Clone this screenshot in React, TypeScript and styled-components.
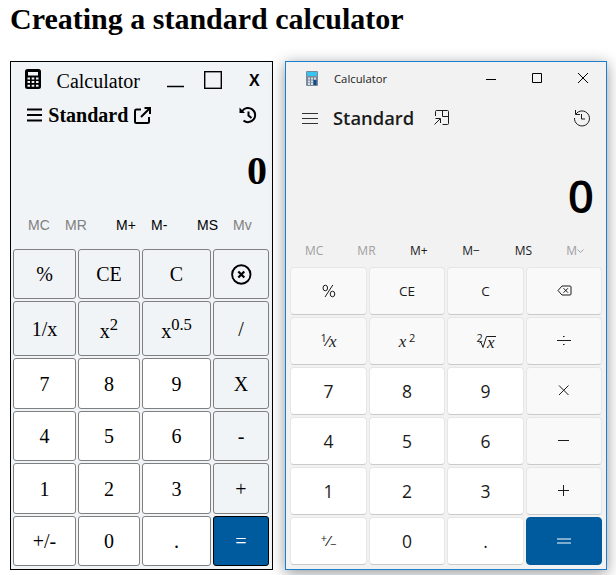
import React from "react";
import styled, { createGlobalStyle } from "styled-components";

const GlobalStyle = createGlobalStyle`
  * { box-sizing: border-box; }
  body { margin: 0; background: #fff; color: #000; overflow: hidden; }
  svg { display: block; }
`;
const serif = `"Liberation Serif", "Times New Roman", serif`;
const segoe = `"Open Sans", "Segoe UI", sans-serif`;

const Page = styled.main`
  height: 575px;
  overflow: hidden;
  padding: 1px 0 0 10px;
`;
const Heading = styled.h1`
  margin: 0;
  height: 60px;
  font: bold 30px/36px ${serif};
  white-space: nowrap;
`;
const Windows = styled.div`
  display: flex;
  gap: 12px;
`;
const BasicWindow = styled.section`
  width: 263px;
  height: 509px;
  border: 1px solid #000;
  background: #f0f4f7;
  font-family: ${serif};
`;
const Bar = styled.div<{ $h: number }>`
  display: flex;
  align-items: center;
  height: ${(p) => p.$h}px;
`;
const Label = styled.span<{ $size: number; $left: number; $w: number; $bold?: boolean; $top?: number }>`
  margin-left: ${(p) => p.$left}px;
  width: ${(p) => p.$w}px;
  padding-top: ${(p) => p.$top ?? 0}px;
  font-size: ${(p) => p.$size}px;
  font-weight: ${(p) => (p.$bold ? 600 : 400)};
  white-space: nowrap;
`;
const Icon = styled.svg<{ $left: number }>`
  flex: none;
  margin-left: ${(p) => p.$left}px;
  overflow: visible;
`;
const CloseLetter = styled.span`
  margin-left: 27px;
  padding-top: 1px;
  font: bold 16px/20px "Liberation Sans", Arial, sans-serif;
`;
const BasicDisplay = styled.div`
  height: 75px;
  padding: 16px 5px 0 0;
  text-align: right;
  font-size: 40px;
  line-height: 46px;
  font-weight: bold;
`;
const BasicMemory = styled.div`
  display: grid;
  grid-template-columns: 37px 51px 35px 46px 36px 30px;
  height: 39px;
  padding: 9px 0 0 17px;
  font: 14px/18px "Liberation Sans", Arial, sans-serif;
`;
const MemoryKey = styled.span<{ $off?: boolean }>`
  color: ${(p) => (p.$off ? "#808080" : "#000")};
`;
const BasicKeys = styled.div`
  display: grid;
  grid-template-columns: 63px 62px 69px 56px;
  grid-template-rows: 50px 55px 51px 50px 51px 50px;
  gap: 2px;
  padding: 3px 0 0 2px;
`;
type Tone = "soft" | "white" | "accent";
const BasicKey = styled.button<{ $tone: Tone }>`
  display: flex;
  align-items: center;
  justify-content: center;
  padding: 1px 0 0;
  border: 1px solid ${(p) => (p.$tone === "accent" ? "#000" : "#808080")};
  border-radius: 3px;
  background: ${(p) => ({ soft: "#f0f4f7", white: "#fff", accent: "#005a9e" })[p.$tone]};
  color: ${(p) => (p.$tone === "accent" ? "#fff" : "#000")};
  font: 20px/23px ${serif};
  sup { font-size: 16.6px; line-height: 18px; }
`;

const ModernWindow = styled.section`
  width: 322px;
  height: 509px;
  border: 1px solid #1b7fd0;
  background: #f2f2f2;
  color: #1b1b1b;
  font-family: ${segoe};
  box-shadow: 0 3px 14px rgba(0, 0, 0, 0.42);
`;
const ModernDisplay = styled.div`
  height: 94px;
  padding: 28px 12px 0 0;
  text-align: right;
  font-size: 46px;
  line-height: 54px;
  font-weight: 600;
  color: #000;
`;
const ModernMemory = styled.div`
  display: grid;
  grid-template-columns: repeat(6, 52.3px);
  align-content: start;
  height: 33px;
  padding: 8px 0 0 2px;
  font-size: 12px;
  line-height: 18px;
  text-align: center;
`;
const ModernMemoryKey = styled.span<{ $off?: boolean }>`
  display: flex;
  align-items: center;
  justify-content: center;
  color: ${(p) => (p.$off ? "#a0a0a0" : "#1b1b1b")};
`;
const ModernKeys = styled.div`
  display: grid;
  grid-template-columns: 77px 76px 77px 76px;
  grid-auto-rows: 48px;
  gap: 2px;
  padding-left: 4px;
`;
const ModernKey = styled.button<{ $tone: Tone; $size?: number }>`
  display: flex;
  align-items: center;
  justify-content: center;
  padding: 0;
  border: 1px solid ${(p) => (p.$tone === "accent" ? "#005a9e" : "#e6e6e6")};
  border-bottom-color: ${(p) => (p.$tone === "accent" ? "#005a9e" : "#cacaca")};
  border-radius: 4px;
  background: ${(p) => ({ soft: "#f9f9f9", white: "#fff", accent: "#005a9e" })[p.$tone]};
  color: #1b1b1b;
  font-family: ${segoe};
  font-size: ${(p) => p.$size || 17.5}px;
  line-height: 22px;
`;
const Formula = styled.span`
  display: flex;
  align-items: center;
  height: 16px;
`;
const Small = styled.small<{ $low?: boolean; $pull?: number }>`
  align-self: ${(p) => (p.$low ? "flex-end" : "flex-start")};
  margin-right: ${(p) => -(p.$pull ?? 0)}px;
  font-size: 11px;
  line-height: 10px;
`;
const Slash = styled.span`
  margin: 0 -1px;
  font-size: 14px;
  line-height: 16px;
  transform: skewX(-14deg);
`;
const Variable = styled.i`
  font: italic 17px/17px ${serif};
`;
const Radicand = styled(Variable)`
  margin-left: -9px;
  padding-top: 2px;
`;

const stroke = { fill: "none", stroke: "currentColor" } as const;

const basicKeys: [React.ReactNode, Tone][] = [
  ["%", "soft"], ["CE", "soft"], ["C", "soft"],
  [
    <svg width="22" height="22" viewBox="0 0 22 22" {...stroke}>
      <circle cx="11.300" cy="10.500" r="9.200" strokeWidth="1.900" />
      <path d="m8.300 7.500 6 6m0-6-6 6" strokeWidth="2.200" />
    </svg>, "soft",
  ],
  ["1/x", "soft"], [<span>x<sup>2</sup></span>, "soft"], [<span>x<sup>0.5</sup></span>, "soft"], ["/", "soft"],
  ["7", "white"], ["8", "white"], ["9", "white"], ["X", "soft"],
  ["4", "white"], ["5", "white"], ["6", "white"], ["-", "soft"],
  ["1", "white"], ["2", "white"], ["3", "white"], ["+", "soft"],
  ["+/-", "white"], ["0", "white"], [".", "white"], ["=", "accent"],
];

const modernKeys: [React.ReactNode, Tone, number?][] = [
  [
    <svg width="14" height="14" viewBox="0 0 14 14" {...stroke}>
      <ellipse cx="3.300" cy="4" rx="2.300" ry="2.800" /><ellipse cx="10.500" cy="10" rx="2.300" ry="2.800" />
      <path d="M10.800 1 3 13" />
    </svg>, "soft", 0,
  ],
  ["CE", "soft", 13.5], ["C", "soft", 13.5],
  [
    <svg width="15" height="12" viewBox="0 0 15 12" {...stroke}>
      <path d="M5 1h8q1 0 1 1v7q0 1-1 1H5L1 5.500z M6.500 3.200l4.500 4.500m0-4.500L6.500 7.700" />
    </svg>, "soft", 0,
  ],
  [<Formula><Small $pull={1}>1</Small><Slash>/</Slash><Variable>x</Variable></Formula>, "soft", 0],
  [<Formula><Variable>x</Variable><Small>&nbsp;2</Small></Formula>, "soft", 0],
  [
    <Formula>
      <Small $pull={4}>2</Small>
      <svg width="17" height="15" viewBox="0 0 17 15" {...stroke}>
        <path d="M.5 9 2 8.200 4 13.500 7.500 2.500H17" />
      </svg>
      <Radicand>x</Radicand>
    </Formula>, "soft", 0,
  ],
  [
    <svg width="14" height="12" viewBox="0 0 14 12" {...stroke}>
      <path d="M0 5.500h14M6 1.500h1.600M6 9.500h1.600" />
    </svg>, "soft", 0,
  ],
  ["7", "white"], ["8", "white"], ["9", "white"],
  [<svg width="12" height="12" viewBox="0 0 12 12" {...stroke}><path d="m1 .5 9.500 9.500M10.500.5 1 10" /></svg>, "soft", 0],
  ["4", "white"], ["5", "white"], ["6", "white"],
  [<svg width="12" height="12" viewBox="0 0 12 12" {...stroke}><path d="M0 5.500h11" /></svg>, "soft", 0],
  ["1", "white"], ["2", "white"], ["3", "white"],
  [<svg width="12" height="12" viewBox="0 0 12 12" {...stroke}><path d="M0 5.500h11M5.500 0v11" /></svg>, "soft", 0],
  [<Formula><Small>+</Small><Slash>/</Slash><Small $low>−</Small></Formula>, "white", 0],
  ["0", "white"], [".", "white"],
  [<svg width="14" height="12" viewBox="0 0 14 12" {...stroke} stroke="#fff"><path d="M0 4h14M0 8h14" /></svg>, "accent", 0],
];

function BasicCalculator() {
  return (
    <BasicWindow>
      <Bar $h={36}>
        <Icon $left={14} width="16" height="20" viewBox="0 1 16 20">
          <rect width="16" height="20" rx="2.500" fill="#000" />
          <path d="M3 3h10v3.500H3zM2.500 8.500h2.500v2H2.500zm4.200 0h2.600v2H6.700zm4.300 0h2.500v2H11zM2.500 12h2.500v2H2.500zm4.200 0h2.600v2H6.700zm4.300 0h2.500v2H11zM2.500 15.700h2.500v2H2.500zm4.200 0h2.600v2H6.700zm4.300 0h2.500v2H11z" fill="#f0f4f7" />
        </Icon>
        <Label $size={20} $left={15.6} $w={84.4} $top={2}>Calculator</Label>
        <Icon $left={26} width="17" height="18" viewBox="0 0 17 18" {...stroke}><path d="M0 15.500h17" strokeWidth="1.500" /></Icon>
        <Icon $left={20} width="18" height="18" viewBox="0 0 18 18" {...stroke}><rect x=".7" y=".7" width="16.600" height="16.600" strokeWidth="1.400" /></Icon>
        <CloseLetter>X</CloseLetter>
      </Bar>
      <Bar $h={34}>
        <Icon $left={16} width="15" height="14" viewBox="0 0 15 14" {...stroke}><path d="M0 1.500h15M0 7h15M0 12.500h15" strokeWidth="1.900" /></Icon>
        <Label $size={20} $left={6.3} $w={80} $bold>Standard</Label>
        <Icon $left={5.7} width="18" height="18" viewBox="0 0 18 18" {...stroke}>
          <path d="M7 3.500H2.500Q1 3.500 1 5v10.500Q1 17 2.500 17h11q1.500 0 1.500-1.500V11M10.500 2H16v6M16 2 7 11" strokeWidth="2" />
        </Icon>
        <Icon $left={87} width="18" height="18" viewBox="0 0 18 18" {...stroke}>
          <path d="M3.200 5A7.100 7.100 0 1 1 4.500 14.500M9.500 5.500v4l3 2.500" strokeWidth="2" />
          <path d="M.5 1.500v5.500H6z" fill="currentColor" stroke="none" />
        </Icon>
      </Bar>
      <BasicDisplay>0</BasicDisplay>
      <BasicMemory>
        <MemoryKey $off>MC</MemoryKey><MemoryKey $off>MR</MemoryKey>
        <MemoryKey>M+</MemoryKey><MemoryKey>M-</MemoryKey><MemoryKey>MS</MemoryKey><MemoryKey $off>Mv</MemoryKey>
      </BasicMemory>
      <BasicKeys>
        {basicKeys.map(([face, tone], i) => <BasicKey key={i} $tone={tone}>{face}</BasicKey>)}
      </BasicKeys>
    </BasicWindow>
  );
}

function ModernCalculator() {
  return (
    <ModernWindow>
      <Bar $h={33}>
        <Icon $left={20} width="12" height="15" viewBox="0 0 12 15">
          <rect width="12" height="15" rx="1" fill="#798b9b" />
          <path d="M1 1h10v4H1z" fill="#36c5f0" />
          <path d="M2 6.500h2v2H2zm3 0h2v2H5zm3 0h2v2H8zM2 9.500h2v2H2zm3 0h2v2H5zM2 12h2v2H2zm3 0h2v2H5z" fill="#d3dce4" />
          <path d="M7.500 9H10.500v5H7.500z" fill="#114a8b" />
        </Icon>
        <Label $size={11.3} $left={16} $w={56}>Calculator</Label>
        <Icon $left={96} width="10" height="10" viewBox="0 1 10 10" {...stroke} stroke="#000"><path d="M0 6.500h10" /></Icon>
        <Icon $left={36} width="10" height="12" viewBox="0 0 10 12" {...stroke} stroke="#000"><path d="M.5.5h9v9h-9z" /></Icon>
        <Icon $left={36} width="10" height="12" viewBox="0 0 10 12" {...stroke} stroke="#000"><path d="m0 0 10 10M10 0 0 10" /></Icon>
      </Bar>
      <Bar $h={45}>
        <Icon $left={16} width="16" height="12" viewBox="0 0 16 12" {...stroke}><path d="M0 1.500h16M0 6.500h16M0 11.500h16" strokeWidth=".9" /></Icon>
        <Label $size={18.4} $left={15} $w={81} $bold>Standard</Label>
        <Icon $left={20} width="15" height="15" viewBox="0 0 15 15" {...stroke}>
          <path d="M1.500 6V1.500q0-1 1-1h11q1 0 1 1v12q0 1-1 1H8.500M8.500.5v6h6M.5 14.500 6 9M1.500 8.500H6.500V13" />
        </Icon>
        <Icon $left={125} width="16" height="16" viewBox="0 0 16 16" {...stroke}>
          <path d="M1.800 4.200A7.500 7.500 0 1 1 .5 8M1.500 0v4.500H6M7.500 4v5H11" />
        </Icon>
      </Bar>
      <ModernDisplay>0</ModernDisplay>
      <ModernMemory>
        <ModernMemoryKey $off>MC</ModernMemoryKey><ModernMemoryKey $off>MR</ModernMemoryKey>
        <ModernMemoryKey>M+</ModernMemoryKey><ModernMemoryKey>M−</ModernMemoryKey><ModernMemoryKey>MS</ModernMemoryKey>
        <ModernMemoryKey $off>M<svg width="8" height="6" viewBox="0 0 8 6" {...stroke}><path d="m.5 1.500 3 3 3-3" /></svg></ModernMemoryKey>
      </ModernMemory>
      <ModernKeys>
        {modernKeys.map(([face, tone, size], i) => <ModernKey key={i} $tone={tone} $size={size}>{face}</ModernKey>)}
      </ModernKeys>
    </ModernWindow>
  );
}

export default function App() {
  return (
    <Page>
      <GlobalStyle />
      <Heading>Creating a standard calculator</Heading>
      <Windows>
        <BasicCalculator />
        <ModernCalculator />
      </Windows>
    </Page>
  );
}
